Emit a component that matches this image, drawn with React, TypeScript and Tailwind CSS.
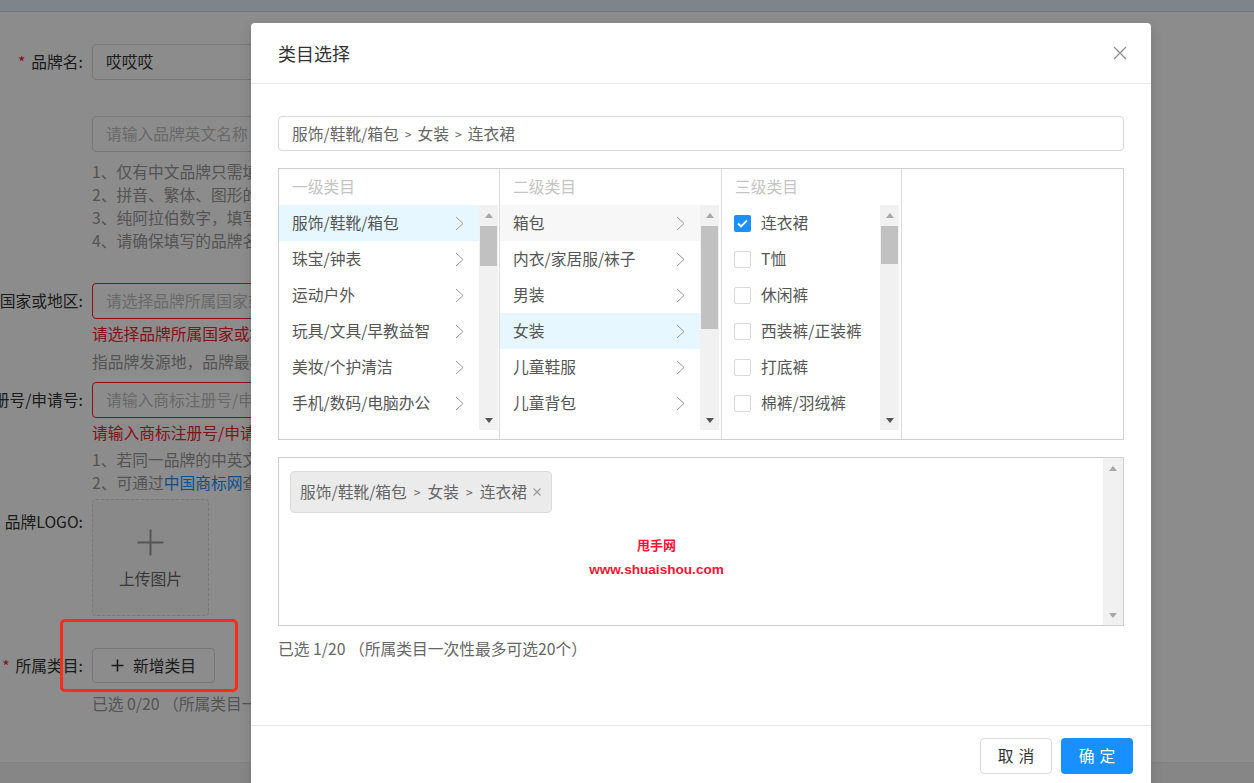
import React from "react";

const level1 = ["服饰/鞋靴/箱包", "珠宝/钟表", "运动户外", "玩具/文具/早教益智", "美妆/个护清洁", "手机/数码/电脑办公"];
const level2 = ["箱包", "内衣/家居服/袜子", "男装", "女装", "儿童鞋服", "儿童背包"];
const level3 = ["连衣裙", "T恤", "休闲裤", "西装裤/正装裤", "打底裤", "棉裤/羽绒裤"];

function Chevron() {
  return (
    <svg width="9" height="15" viewBox="0 0 9 15" fill="none">
      <path d="M1 1l7 6.5L1 14" stroke="#9a9a9a" strokeWidth="1" />
    </svg>
  );
}

function Tri({ up, color }: { up?: boolean; color: string }) {
  return (
    <svg width="8" height="5" viewBox="0 0 8 5">
      <path d={up ? "M0 5L4 0L8 5Z" : "M0 0L8 0L4 5Z"} fill={color} />
    </svg>
  );
}

function ScrollBar({ thumb, down = "#555555", wide }: { thumb?: string; down?: string; wide?: boolean }) {
  return (
    <div className={`${wide ? "w-[20px]" : "w-[19px]"} h-full bg-[#f1f1f1] flex flex-col items-center shrink-0`}>
      <div className="h-[20px] flex items-center justify-center">
        <Tri up color="#a8a8a8" />
      </div>
      {thumb && <div className={`w-[17px] bg-[#c1c1c1] mt-px ${thumb}`} />}
      <div className="flex-1" />
      <div className="h-[20px] flex items-center justify-center">
        <Tri color={down} />
      </div>
    </div>
  );
}

function Checkbox({ checked }: { checked?: boolean }) {
  if (checked) {
    return (
      <div className="w-[17px] h-[17px] shrink-0 rounded-[2px] bg-[#1890ff] flex items-center justify-center">
        <svg width="11" height="9" viewBox="0 0 11 9" fill="none">
          <path d="M1 4.5l3 3L10 1.5" stroke="#fff" strokeWidth="1.8" />
        </svg>
      </div>
    );
  }
  return <div className="w-[17px] h-[17px] shrink-0 rounded-[2px] border border-[#d9d9d9] bg-white" />;
}

function FormRow({ label, star, children }: { label: string; star?: boolean; children: React.ReactNode }) {
  return (
    <div className="flex items-center">
      <div className="w-[84px] shrink-0 flex justify-end whitespace-nowrap text-[15.75px] leading-[22px] text-[#333] pr-[1px]">
        {star && <span className="text-[#f5222d] mr-[6px]">*</span>}
        {label}
      </div>
      <div className="ml-[8px]">{children}</div>
    </div>
  );
}

function Hint({ children, red }: { children: React.ReactNode; red?: boolean }) {
  return (
    <div className={`ml-[92px] whitespace-nowrap text-[15.75px] leading-[23px] ${red ? "text-[#f5222d]" : "text-[#999]"}`}>
      {children}
    </div>
  );
}

export default function App() {
  return (
    <div className="relative w-[1254px] h-[783px] overflow-hidden bg-white flex flex-col font-['Noto_Sans_CJK_SC',sans-serif]">
      <div className="h-[12px] shrink-0 bg-[#e6f1fc] border-b border-[#c4d3e3]" />

      <div className="mt-[32px]">
        <FormRow label="品牌名:" star>
          <div className="w-[420px] h-[36px] border border-[#d9d9d9] rounded-[4px] px-[13px] flex items-center text-[15.75px] text-[#333]">
            哎哎哎
          </div>
        </FormRow>
      </div>
      <div className="mt-[36px]">
        <FormRow label="">
          <div className="w-[420px] h-[36px] border border-[#d9d9d9] rounded-[4px] px-[13px] flex items-center text-[15.75px] text-[#bfbfbf]">
            请输入品牌英文名称
          </div>
        </FormRow>
      </div>
      <div className="mt-[8px]">
        <Hint>1、仅有中文品牌只需填写中文名称</Hint>
        <Hint>2、拼音、繁体、图形的品牌请填写</Hint>
        <Hint>3、纯阿拉伯数字，填写在中文名称</Hint>
        <Hint>4、请确保填写的品牌名称与注册</Hint>
      </div>
      <div className="mt-[31px]">
        <FormRow label="品牌所属国家或地区:">
          <div className="w-[420px] h-[36px] border border-[#f5222d] rounded-[4px] px-[13px] flex items-center text-[15.75px] text-[#bfbfbf]">
            请选择品牌所属国家或地区
          </div>
        </FormRow>
      </div>
      <div className="mt-[3px]">
        <Hint red>请选择品牌所属国家或地区</Hint>
      </div>
      <div className="mt-[5px]">
        <Hint>指品牌发源地，品牌最初注册的国家</Hint>
      </div>
      <div className="mt-[9px]">
        <FormRow label="商标注册号/申请号:">
          <div className="w-[420px] h-[36px] border border-[#f5222d] rounded-[4px] px-[13px] flex items-center text-[15.75px] text-[#bfbfbf]">
            请输入商标注册号/申请号
          </div>
        </FormRow>
      </div>
      <div className="mt-[3px]">
        <Hint red>请输入商标注册号/申请号</Hint>
      </div>
      <div className="mt-[4px]">
        <Hint>1、若同一品牌的中英文名称分开注册</Hint>
        <Hint>
          2、可通过<span className="text-[#1890ff]">中国商标网</span>查询
        </Hint>
      </div>
      <div className="mt-[5px] flex items-start">
        <div className="w-[84px] shrink-0 flex justify-end whitespace-nowrap text-[15.75px] leading-[22px] text-[#333] pr-[1px] mt-[12px]">
          品牌LOGO:
        </div>
        <div className="ml-[8px] w-[117px] h-[117px] border border-dashed border-[#d9d9d9] rounded-[4px] bg-[#fafafa] flex flex-col items-center">
          <svg className="mt-[29px]" width="27" height="27" viewBox="0 0 27 27">
            <path d="M13.5 0.5v26M0.5 13.5h26" stroke="#999" strokeWidth="2" />
          </svg>
          <div className="mt-[12px] text-[15.75px] leading-[22px] text-[#666]">上传图片</div>
        </div>
      </div>
      <div className="mt-[32px]">
        <FormRow label="所属类目:" star>
          <div className="w-[123px] h-[35px] border border-[#d9d9d9] rounded-[4px] flex items-center justify-center gap-[9px] text-[15.75px] text-[#333]">
            <svg width="13" height="13" viewBox="0 0 13 13">
              <path d="M6.5 0.5v12M0.5 6.5h12" stroke="#333" strokeWidth="1.6" />
            </svg>
            新增类目
          </div>
        </FormRow>
      </div>
      <div className="mt-[9px]">
        <Hint>已选 0/20 （所属类目一次性最多可选20个）</Hint>
      </div>

      <div className="mt-auto h-[21px] shrink-0 bg-[#f5f5f5] border-t border-[#eeeeee]" />

      {/* mask */}
      <div className="absolute inset-0 bg-black/45" />

      {/* annotation */}
      <div className="absolute left-[60px] top-[619px] w-[178px] h-[73px] border-[3px] border-[#ff2a1a] rounded-[5px]" />

      {/* modal */}
      <div className="absolute left-[251px] top-[23px] w-[900px] h-[800px] bg-white rounded-t-[4px] shadow-[0_4px_12px_rgba(0,0,0,0.15)] flex flex-col">
        <div className="h-[61px] shrink-0 border-b border-[#e8e8e8] pl-[27px] pr-[24px] flex items-center justify-between">
          <div className="text-[18px] leading-[24px] text-[#333]">类目选择</div>
          <svg width="14" height="14" viewBox="0 0 14 14">
            <path d="M1 1L13 13M13 1L1 13" stroke="#8c8c8c" strokeWidth="1.3" />
          </svg>
        </div>

        <div className="h-[641px] shrink-0 px-[27px] pt-[32px]">
          <div className="h-[35px] border border-[#d9d9d9] rounded-[4px] pl-[13px] flex items-center text-[15.75px] text-[#666] whitespace-nowrap">
            服饰/鞋靴/箱包<span className="mx-[6px] text-[12px]">&gt;</span>女装<span className="mx-[6px] text-[12px]">&gt;</span>连衣裙
          </div>

          <div className="mt-[17px] h-[272px] border border-[#cfcfcf] flex">
            {/* level 1 */}
            <div className="w-[221px] border-r border-[#dcdcdc] flex flex-col">
              <div className="h-[36px] pl-[13px] flex items-center text-[15.75px] leading-[22px] text-[#c4c4c4]">一级类目</div>
              <div className="h-[225px] flex pr-[1px]">
                <div className="flex-1 min-w-0">
                  {level1.map((t, i) => (
                    <div
                      key={t}
                      className={`h-[36px] pl-[13px] pr-[15px] flex items-center justify-between text-[15.75px] leading-[22px] text-[#555] whitespace-nowrap ${i === 0 ? "bg-[#e6f7ff]" : ""}`}
                    >
                      {t}
                      <Chevron />
                    </div>
                  ))}
                </div>
                <ScrollBar thumb="h-[40px]" />
              </div>
            </div>

            {/* level 2 */}
            <div className="w-[222px] border-r border-[#dcdcdc] flex flex-col">
              <div className="h-[36px] pl-[13px] flex items-center text-[15.75px] leading-[22px] text-[#c4c4c4]">二级类目</div>
              <div className="h-[225px] flex pr-[2px]">
                <div className="flex-1 min-w-0">
                  {level2.map((t, i) => (
                    <div
                      key={t}
                      className={`h-[36px] pl-[13px] pr-[15px] flex items-center justify-between text-[15.75px] leading-[22px] text-[#555] whitespace-nowrap ${i === 3 ? "bg-[#e6f7ff]" : i === 0 ? "bg-[#f7f7f7]" : ""}`}
                    >
                      {t}
                      <Chevron />
                    </div>
                  ))}
                </div>
                <ScrollBar thumb="h-[103px]" />
              </div>
            </div>

            {/* level 3 */}
            <div className="w-[180px] border-r border-[#dcdcdc] flex flex-col">
              <div className="h-[36px] pl-[13px] flex items-center text-[15.75px] leading-[22px] text-[#c4c4c4]">三级类目</div>
              <div className="h-[225px] flex pr-[2px]">
                <div className="flex-1 min-w-0">
                  {level3.map((t, i) => (
                    <div key={t} className="h-[36px] pl-[12px] flex items-center gap-[10px] text-[15.75px] leading-[22px] text-[#555] whitespace-nowrap">
                      <Checkbox checked={i === 0} />
                      {t}
                    </div>
                  ))}
                </div>
                <ScrollBar thumb="h-[38px]" />
              </div>
            </div>
          </div>

          <div className="relative mt-[17px] h-[169px] border border-[#cfcfcf] flex">
            <div className="flex-1 pl-[11px] pt-[13px]">
              <div className="inline-flex items-center h-[42px] pl-[9px] pr-[10px] bg-[#ebebeb] border border-[#dcdcdc] rounded-[4px] text-[15.75px] text-[#666] whitespace-nowrap">
                服饰/鞋靴/箱包<span className="mx-[7px] text-[12px]">&gt;</span>女装<span className="mx-[7px] text-[12px]">&gt;</span>连衣裙
                <svg className="ml-[6px]" width="8" height="8" viewBox="0 0 8 8">
                  <path d="M0.5 0.5l7 7M7.5 0.5l-7 7" stroke="#9a9a9a" strokeWidth="1.1" />
                </svg>
              </div>
            </div>
            <ScrollBar wide down="#a8a8a8" />
            <div className="absolute left-[286px] top-[78px] w-[183px] flex flex-col items-center text-[#ff1234] font-bold">
              <div className="text-[13px] leading-[18px]">甩手网</div>
              <div className="mt-[7px] text-[13.6px] leading-[18px] font-['Liberation_Sans',sans-serif]">www.shuaishou.com</div>
            </div>
          </div>

          <div className="mt-[12px] text-[15.75px] leading-[22px] text-[#666] whitespace-nowrap">已选 1/20 （所属类目一次性最多可选20个）</div>
        </div>

        <div className="border-t border-[#e8e8e8] pt-[12px] pr-[18px] flex justify-end gap-[9px]">
          <div className="w-[72px] h-[36px] border border-[#d9d9d9] rounded-[4px] flex items-center justify-center text-[15.75px] text-[#333] tracking-[5px] pl-[5px]">
            取消
          </div>
          <div className="w-[72px] h-[36px] bg-[#1890ff] rounded-[4px] flex items-center justify-center text-[15.75px] text-white tracking-[5px] pl-[5px]">
            确定
          </div>
        </div>
      </div>
    </div>
  );
}
